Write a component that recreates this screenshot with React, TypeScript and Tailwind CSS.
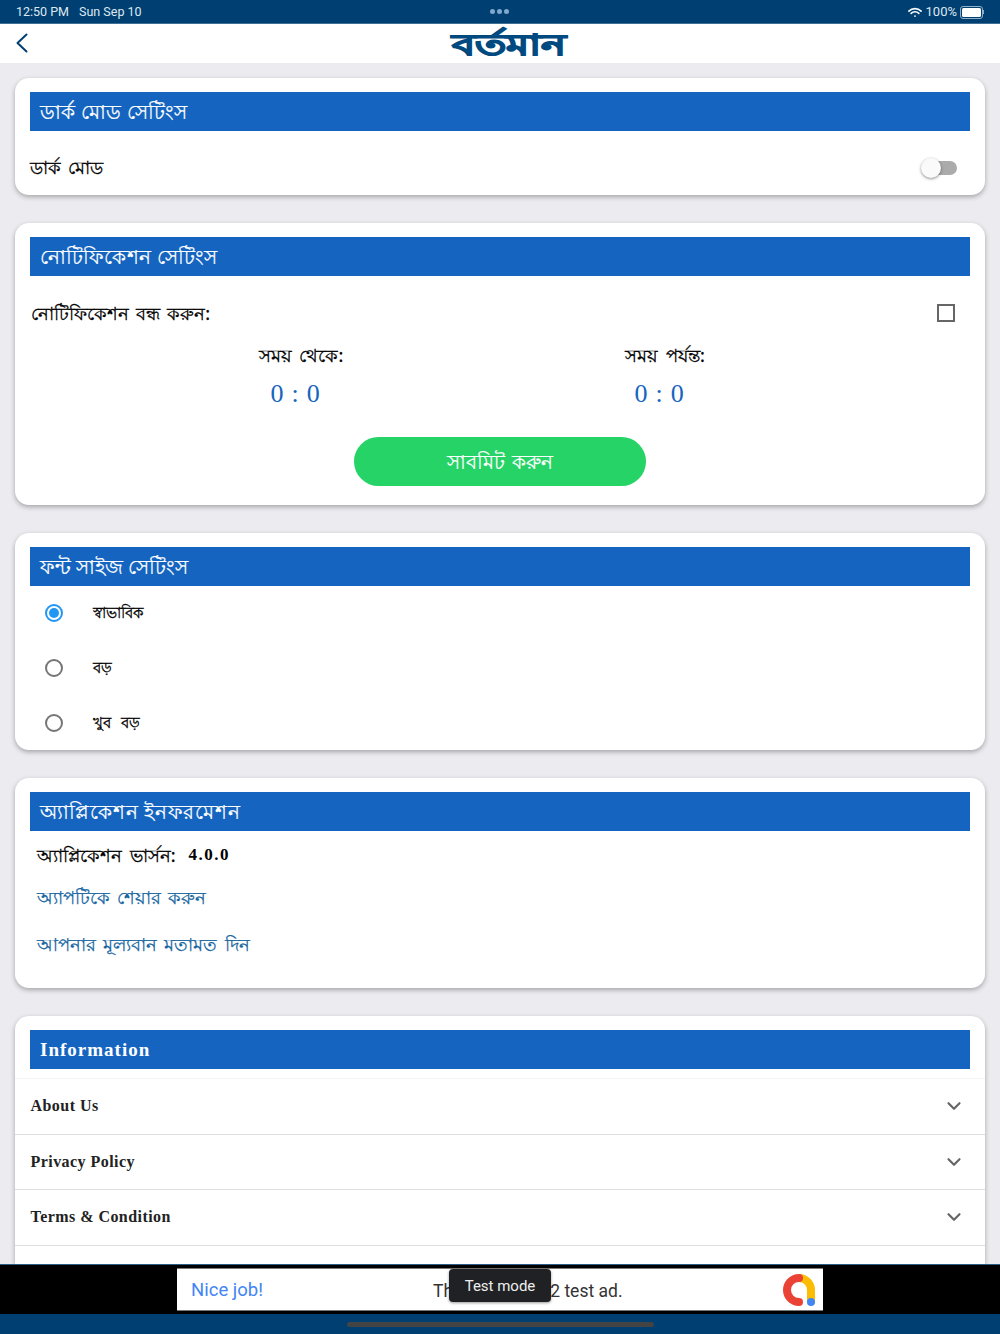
import { ChevronDown } from 'lucide-react'
import type { ReactNode } from 'react'

function Card({ title, className, titleClass, children }: { title: string; className: string; titleClass?: string; children: ReactNode }) {
  return (
    <section className={`mx-[15px] rounded-[14px] bg-white pt-[14px] shadow-[0_2px_5px_rgba(0,0,0,0.3)] ${className}`}>
      <h2 className={`ml-[14.5px] mr-[15px] flex h-[39px] items-center bg-[#1565c0] pl-[10px] text-[20px] font-medium text-white [-webkit-text-stroke:0.2px_#fff] ${titleClass ?? 'tracking-[0.3px]'}`}>
        {title}
      </h2>
      {children}
    </section>
  )
}

function Radio({ label, checked }: { label: string; checked?: boolean }) {
  return (
    <div className="flex h-[55px] items-center pl-[30px]">
      <span className={`flex h-[18px] w-[18px] items-center justify-center rounded-full border-2 ${checked ? 'border-[#2196f3]' : 'border-[#757575]'}`}>
        {checked && <span className="h-[10px] w-[10px] rounded-full bg-[#2196f3]" />}
      </span>
      <span className="ml-[30px] text-[15px] text-black [-webkit-text-stroke:0.3px_#000] [word-spacing:6px]">{label}</span>
    </div>
  )
}

function AccordionRow({ label }: { label: string }) {
  return (
    <div className="flex h-[55.5px] items-center justify-between border-b border-[#dedede] pl-[15.5px] pr-[20px]">
      <span className="font-['Liberation_Serif',serif] text-[16px] font-bold tracking-[0.45px] text-[#222]">{label}</span>
      <ChevronDown className="h-[22px] w-[22px] text-[#666]" strokeWidth={2.4} />
    </div>
  )
}

function TimeBlock({ label }: { label: string }) {
  return (
    <div className="flex w-[190px] flex-col items-center">
      <span className="text-[18px] text-black [-webkit-text-stroke:0.3px_#000] [word-spacing:3px]">{label}</span>
      <span className="mr-[11px] mt-[8px] font-['Liberation_Serif',serif] text-[26px] leading-[34px] tracking-[0.8px] text-[#1565c0]">0 : 0</span>
    </div>
  )
}

export default function App() {
  return (
    <div className="flex h-[1334px] w-[1000px] flex-col overflow-hidden bg-[#ebebf0] font-['Noto_Sans','Liberation_Sans',sans-serif]">
      <div className="relative flex h-[24px] shrink-0 items-center justify-between border-b border-[#3f7198] bg-[#003f72] pl-[16px] pr-[16px] pt-[1px] font-['Roboto',sans-serif] text-[12.5px] text-[#dfe8f0]">
        <div className="flex gap-[10px]">
          <span>12:50 PM</span>
          <span>Sun Sep 10</span>
        </div>
        <div className="absolute left-[490px] top-[9px] flex gap-[2px]">
          <span className="h-[5px] w-[5px] rounded-full bg-[#7fa8cc]" />
          <span className="h-[5px] w-[5px] rounded-full bg-[#7fa8cc]" />
          <span className="h-[5px] w-[5px] rounded-full bg-[#7fa8cc]" />
        </div>
        <div className="flex items-center">
          <svg viewBox="0 0 16 12" className="h-[11px] w-[14px]" fill="none" stroke="#fff" strokeWidth="1.8" strokeLinecap="round">
            <path d="M1 4.4a10 10 0 0 1 14 0" />
            <path d="M3.6 7a6.3 6.3 0 0 1 8.8 0" />
            <circle cx="8" cy="10" r="1" fill="#fff" stroke="none" />
          </svg>
          <span className="ml-[4px] text-[13px]">100%</span>
          <div className="ml-[3px] flex items-center">
            <div className="h-[13px] w-[23px] rounded-[3px] border border-[#8fb0c9] p-[1px]">
              <div className="h-full w-full rounded-[1.5px] bg-white" />
            </div>
            <div className="h-[4px] w-[1px] bg-[#8fb0c9]" />
          </div>
        </div>
      </div>

      <header className="relative flex h-[39px] shrink-0 items-center justify-center bg-white">
        <svg viewBox="0 0 12 20" className="absolute left-[16px] top-[9px] h-[20px] w-[12px]" fill="none" stroke="#003f72" strokeWidth="2" strokeLinecap="round" strokeLinejoin="round">
          <path d="M10.5 1.5 1.5 10l9 8.5" />
        </svg>
        <span className="ml-[16px] scale-x-[1.44] text-[29px] font-black leading-none text-[#004a80] [-webkit-text-stroke:1.2px_#004a80]">বর্তমান</span>
      </header>

      <main className="flex min-h-0 flex-1 flex-col gap-[28px] overflow-hidden pt-[15px]">
        <Card title="ডার্ক মোড সেটিংস" className="h-[117px] shrink-0">
          <div className="flex h-[73px] items-center justify-between pl-[15px] pr-[28px]">
            <span className="text-[18px] text-black [-webkit-text-stroke:0.3px_#000] [word-spacing:2px]">ডার্ক মোড</span>
            <div className="relative h-[14px] w-[32px] rounded-full bg-[#ababab]">
              <span className="absolute left-[-4px] top-[-3px] h-[20px] w-[20px] rounded-full bg-[#fafafa] shadow-[0_1px_3px_rgba(0,0,0,0.45)]" />
            </div>
          </div>
        </Card>

        <Card title="নোটিফিকেশন সেটিংস" className="h-[282px] shrink-0">
          <div className="flex h-[66px] items-center justify-between pl-[16px] pr-[30px] pt-[8px]">
            <span className="text-[18px] text-black [-webkit-text-stroke:0.3px_#000] [word-spacing:2.5px]">নোটিফিকেশন বন্ধ করুন:</span>
            <span className="h-[18px] w-[18px] border-2 border-[#666]" />
          </div>
          <div className="flex pl-[191px]">
            <TimeBlock label="সময় থেকে:" />
            <div className="w-[174px]" />
            <TimeBlock label="সময় পর্যন্ত:" />
          </div>
          <div className="mt-[26px] flex justify-center">
            <button className="h-[49px] w-[292px] rounded-full bg-[#25d366] text-[20px] text-white [-webkit-text-stroke:0.2px_#fff] [word-spacing:2px]">সাবমিট করুন</button>
          </div>
        </Card>

        <Card title="ফন্ট সাইজ সেটিংস" titleClass="tracking-normal" className="h-[217px] shrink-0">
          <div className="-mt-[1px]">
            <Radio label="স্বাভাবিক" checked />
            <Radio label="বড়" />
            <Radio label="খুব বড়" />
          </div>
        </Card>

        <Card title="অ্যাপ্লিকেশন ইনফরমেশন" titleClass="tracking-[0.75px]" className="h-[210px] shrink-0">
          <div className="pl-[22px]">
            <p className="mt-[9px] flex items-center text-[18px] leading-[30px] text-black [word-spacing:3px]">
              <span className="[-webkit-text-stroke:0.3px_#000]">অ্যাপ্লিকেশন ভার্সন:</span>
              <b className="ml-[13px] font-['Liberation_Serif',serif] text-[17px] tracking-[1.5px]">4.0.0</b>
            </p>
            <p className="mt-[12px] text-[18px] leading-[30px] text-[#1565a0] [-webkit-text-stroke:0.25px_#1565a0] [word-spacing:2.5px]">অ্যাপটিকে শেয়ার করুন</p>
            <p className="mt-[17px] text-[18px] leading-[30px] text-[#1565a0] [-webkit-text-stroke:0.25px_#1565a0] [word-spacing:2.5px]">আপনার মূল্যবান মতামত দিন</p>
          </div>
        </Card>

        <section className="mx-[15px] flex-1 rounded-t-[14px] bg-white pt-[14px] shadow-[0_2px_5px_rgba(0,0,0,0.3)]">
          <h2 className="ml-[14.5px] mr-[15px] mb-[9px] flex h-[39px] items-center bg-[#1565c0] pl-[10.5px] pt-[2px] font-['Liberation_Serif',serif] text-[19px] font-bold tracking-[1px] text-white">
            Information
          </h2>
          <div className="h-[1px] bg-[#f4f4f4]" />
          <AccordionRow label="About Us" />
          <AccordionRow label="Privacy Policy" />
          <AccordionRow label="Terms & Condition" />
        </section>
      </main>

      <div className="relative flex h-[50px] shrink-0 items-center justify-center border-t border-[#2c5d86] bg-black">
        <div className="flex h-[43px] w-[646px] items-center justify-between border-y border-[#777] bg-white pl-[14px] pr-[8px] font-['Roboto',sans-serif]">
          <span className="pt-[3px] text-[18.5px] text-[#4285f4]">Nice job!</span>
          <span className="absolute left-[433px] top-[13px] text-[17.5px] text-[#333]">This is a 320x52 test ad.</span>
          <svg viewBox="0 0 32 32" className="h-[32px] w-[32px]">
            <path d="M16 4A12 12 0 0 1 28 16V28" fill="none" stroke="#fbbc04" strokeWidth="8" />
            <path d="M16 4A12 12 0 0 0 16 28" fill="none" stroke="#ea4335" strokeWidth="8" strokeLinecap="round" />
            <circle cx="28" cy="28" r="4" fill="#4285f4" />
          </svg>
        </div>
        <div className="absolute left-[449px] top-[4px] flex h-[33px] w-[102px] items-center justify-center rounded-[4px] bg-[#202124] pt-[1px] font-['Roboto',sans-serif] text-[15px] text-[#eee] shadow-[0_1px_3px_rgba(0,0,0,0.4)]">
          Test mode
        </div>
      </div>

      <div className="flex h-[20px] shrink-0 items-center justify-center bg-[#003f72]">
        <div className="h-[5px] w-[307px] rounded-full bg-[#444]" />
      </div>
    </div>
  )
}
